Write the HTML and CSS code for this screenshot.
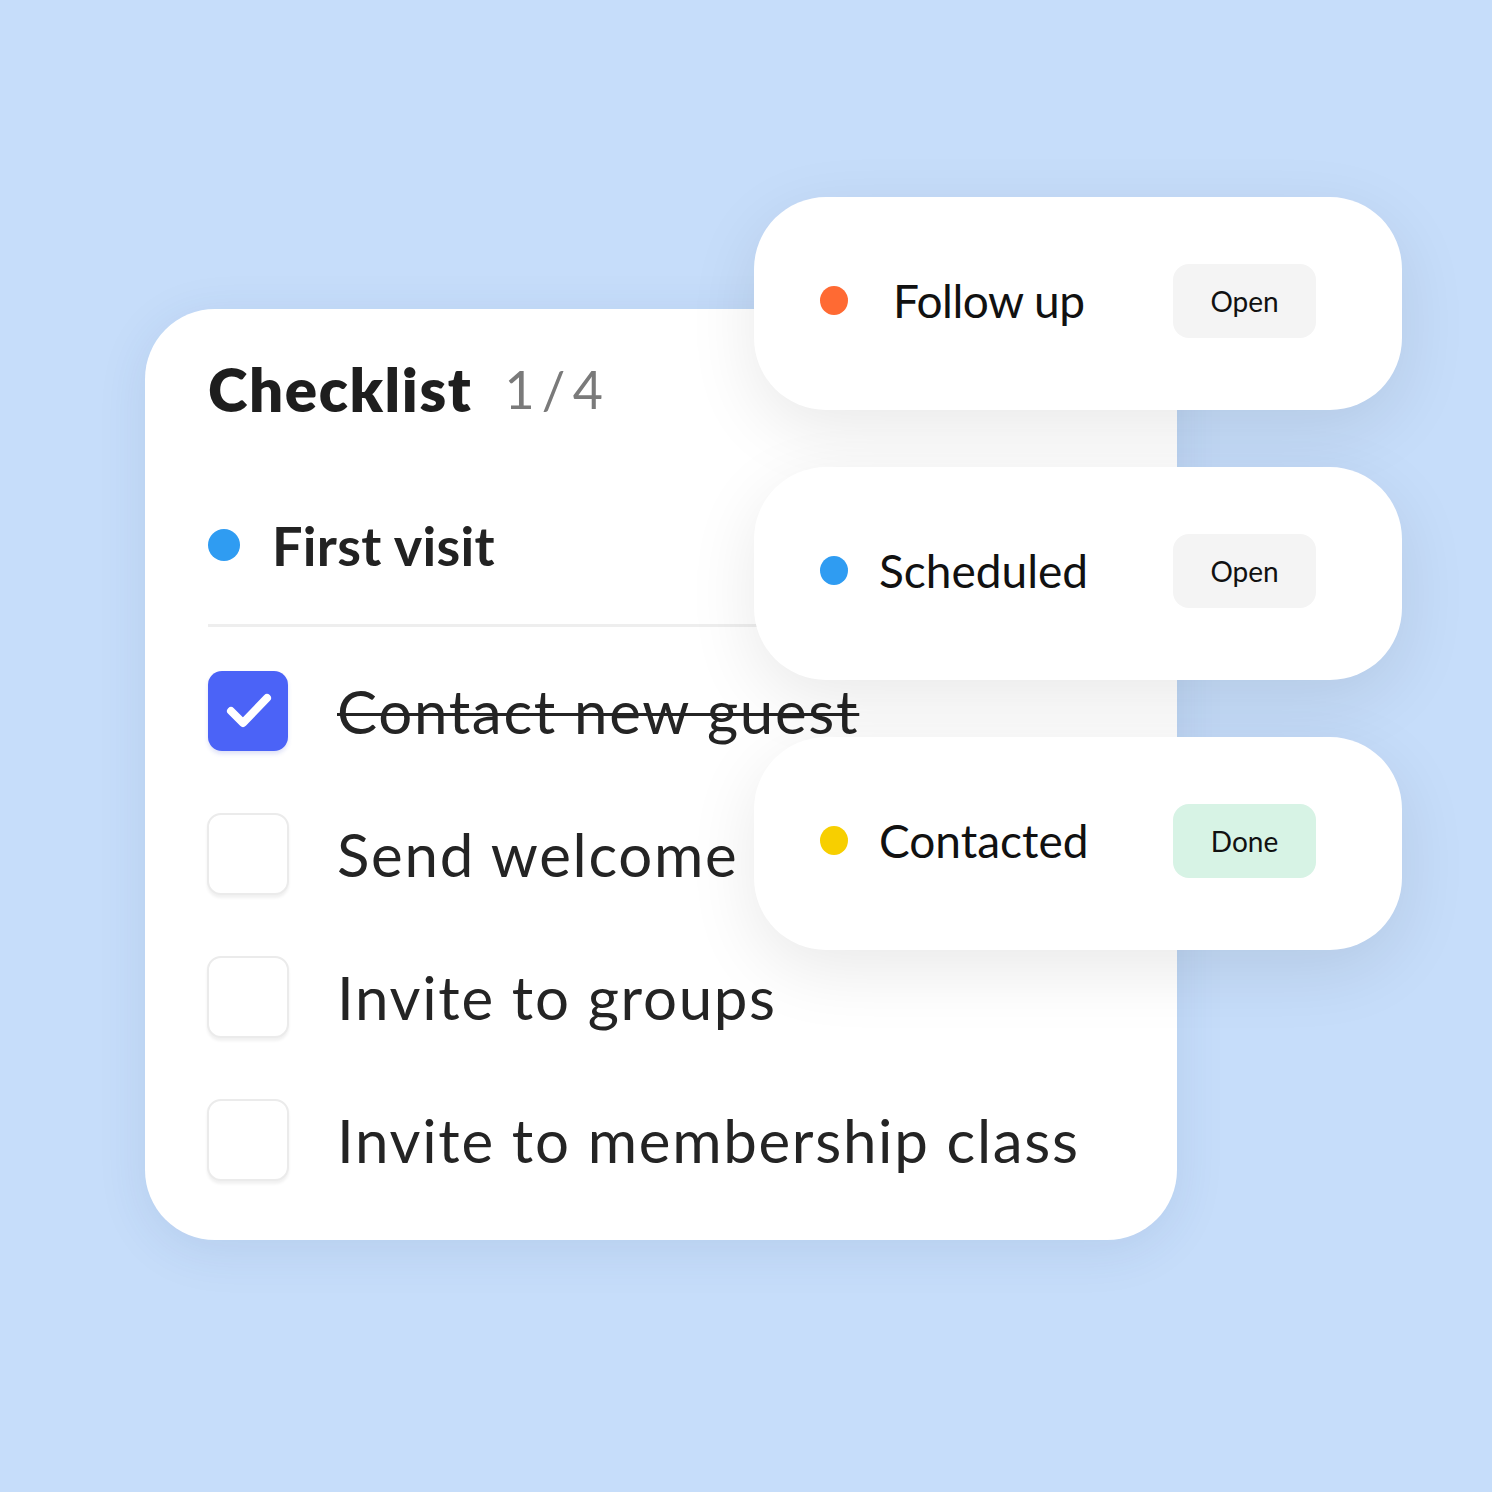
FILE: index.html
```html
<!DOCTYPE html>
<html lang="en">
<head>
<meta charset="utf-8">
<title>Checklist</title>
<link rel="stylesheet" href="styles.css">
</head>
<body>
<div class="stage">
  <section class="checklist">
    <header class="cl-head">
      <h1 class="cl-title">Checklist</h1>
      <span class="cl-count">1 / 4</span>
    </header>
    <div class="cl-group">
      <span class="dot dot-blue"></span>
      <span class="cl-group-name">First visit</span>
    </div>
    <div class="cl-divider"></div>
    <ul class="cl-items">
      <li class="cl-item done">
        <span class="box box-checked">
          <svg viewBox="0 0 80 80" width="80" height="80"><path d="M23 40 L35 52 L59 27" fill="none" stroke="#fff" stroke-width="8" stroke-linecap="round" stroke-linejoin="round"/></svg>
        </span>
        <span class="cl-text">Contact new guest</span>
      </li>
      <li class="cl-item">
        <span class="box"></span>
        <span class="cl-text">Send welcome</span>
      </li>
      <li class="cl-item">
        <span class="box"></span>
        <span class="cl-text">Invite to groups</span>
      </li>
      <li class="cl-item">
        <span class="box"></span>
        <span class="cl-text">Invite to membership class</span>
      </li>
    </ul>
  </section>

  <div class="status-stack">
    <div class="status-card">
      <span class="dot dot-orange"></span>
      <span class="status-name status-name-wide">Follow up</span>
      <span class="badge">Open</span>
    </div>
    <div class="status-card">
      <span class="dot dot-blue2"></span>
      <span class="status-name">Scheduled</span>
      <span class="badge">Open</span>
    </div>
    <div class="status-card">
      <span class="dot dot-yellow"></span>
      <span class="status-name">Contacted</span>
      <span class="badge badge-done">Done</span>
    </div>
  </div>
</div>
</body>
</html>
```

FILE: styles.css
```css
* { box-sizing: border-box; }
html, body { margin: 0; padding: 0; }
body {
  width: 1492px;
  height: 1492px;
  overflow: hidden;
  background: #c6ddfa;
  font-family: "Lato", "Noto Sans", sans-serif;
  color: #222;
}
.stage {
  position: relative;
  width: 1492px;
  height: 1492px;
  padding: 309px 0 0 145px;
}
.checklist {
  width: 1032px;
  height: 931px;
  background: #fff;
  border-radius: 70px;
  padding: 40px 63px 0 63px;
  box-shadow: 0 10px 50px rgba(40, 70, 120, 0.10);
}
.cl-head {
  height: 80px;
  display: flex;
  align-items: center;
  gap: 32px;
}
.cl-title {
  margin: 0;
  font-size: 60px;
  font-weight: 800;
  color: #1e1e1e;
  letter-spacing: 1.6px;
}
.cl-count {
  font-size: 52px;
  font-weight: 400;
  color: #7a7a7a;
  word-spacing: -6px;
}
.cl-group {
  margin-top: 76px;
  height: 80px;
  display: flex;
  align-items: center;
  gap: 32px;
}
.cl-group-name {
  font-size: 54px;
  font-weight: 700;
  color: #222;
  letter-spacing: 0.3px;
}
.dot {
  display: inline-block;
  width: 32px;
  height: 32px;
  border-radius: 50%;
  flex: none;
}
.dot-blue { background: #2f9cf2; }
.dot-blue2 { background: #2f9cf2; }
.dot-orange { background: #ff6a33; }
.dot-yellow { background: #f7cf00; }
.cl-divider {
  margin-top: 39px;
  height: 3px;
  background: #eeeeee;
}
.cl-items {
  list-style: none;
  margin: 43px 0 0 0;
  padding: 0;
  display: flex;
  flex-direction: column;
  gap: 62px;
}
.cl-item {
  height: 81px;
  display: flex;
  align-items: center;
  gap: 48px;
}
.box {
  width: 82px;
  height: 82px;
  border-radius: 14px;
  background: #fff;
  border: 2px solid #ebebeb;
  box-shadow: 0 3px 3px rgba(0, 0, 0, 0.06);
  flex: none;
  margin-left: -1px;
  display: flex;
  align-items: center;
  justify-content: center;
}
.box-checked {
  width: 80px;
  height: 80px;
  margin-left: 0;
  margin-right: 1px;
  background: #4b63f7;
  border: none;
  box-shadow: 0 3px 4px rgba(40, 60, 200, 0.15);
}
.cl-text {
  font-size: 60px;
  font-weight: 400;
  color: #242424;
  white-space: nowrap;
  letter-spacing: 1.7px;
}
.cl-item.done .cl-text {
  text-decoration: line-through;
  text-decoration-thickness: 3px;
}

.status-stack {
  position: absolute;
  left: 754px;
  top: 197px;
  width: 648px;
  display: flex;
  flex-direction: column;
  gap: 57px;
}
.status-card {
  height: 213px;
  background: #fff;
  border-radius: 72px;
  display: flex;
  align-items: center;
  padding: 0 86px 6px 66px;
  box-shadow: 0 20px 70px rgba(0, 0, 0, 0.09);
}
.status-card .dot {
  width: 28px;
  height: 29px;
}
.status-name {
  margin-left: 31px;
  font-size: 46px;
  font-weight: 400;
  color: #111;
  flex: 1;
}
.status-name-wide { margin-left: 45px; letter-spacing: -0.5px; }
.badge {
  width: 143px;
  height: 74px;
  border-radius: 16px;
  background: #f4f4f4;
  display: flex;
  align-items: center;
  justify-content: center;
  font-size: 28px;
  color: #111;
}
.badge-done { background: #d7f3e5; }
```
